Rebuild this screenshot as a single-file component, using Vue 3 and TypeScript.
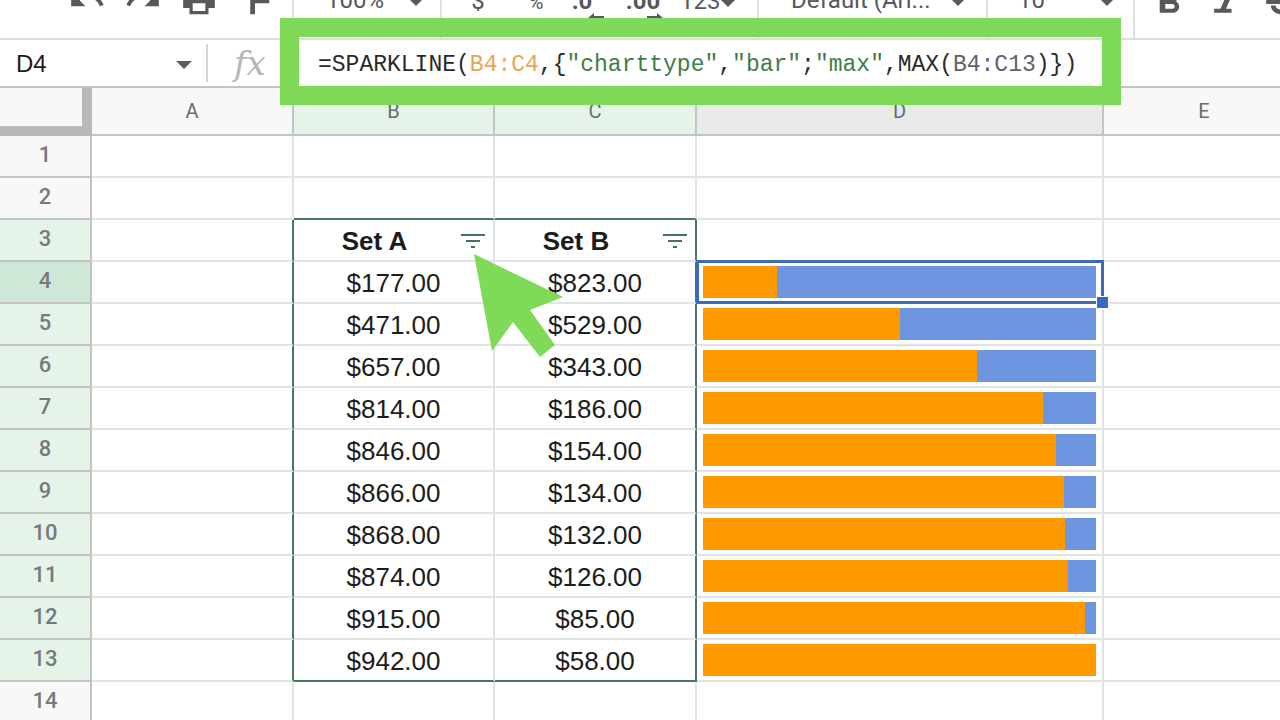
<script setup lang="ts">
interface DataRow {
  n: number
  a?: number
  b?: number
}

const columns = ['A', 'B', 'C', 'D', 'E']

const data: [number, number][] = [
  [177, 823], [471, 529], [657, 343], [814, 186], [846, 154],
  [866, 134], [868, 132], [874, 126], [915, 85], [942, 58],
]
const max = Math.max(...data.flat())

const rows: DataRow[] = Array.from({ length: 14 }, (_, i) => {
  const pair = data[i - 3]
  return pair ? { n: i + 1, a: pair[0], b: pair[1] } : { n: i + 1 }
})

const formula = [
  { t: '=SPARKLINE(', c: 'plain' },
  { t: 'B4:C4', c: 'range' },
  { t: ',{', c: 'plain' },
  { t: '"charttype"', c: 'str' },
  { t: ',', c: 'plain' },
  { t: '"bar"', c: 'str' },
  { t: ';', c: 'plain' },
  { t: '"max"', c: 'str' },
  { t: ',MAX(', c: 'plain' },
  { t: 'B4:C13', c: 'range2' },
  { t: ')})', c: 'plain' },
]

const money = (v: number) => '$' + v.toFixed(2)
const share = (v: number) => (v / max) * 100 + '%'
const inFilter = (n: number) => n >= 3 && n <= 13
</script>

<template>
  <div class="page">
    <header class="toolbar">
      <div class="tools">
        <div class="group history">
          <button aria-label="Undo"><svg class="icon" viewBox="0 0 24 24"><path d="M12.5 8c-2.65 0-5.05.99-6.9 2.6L2 7v9h9l-3.62-3.62c1.39-1.16 3.16-1.88 5.12-1.88 3.54 0 6.55 2.31 7.6 5.5l2.37-.78C21.08 11.03 17.15 8 12.5 8z" /></svg></button>
          <button aria-label="Redo"><svg class="icon" viewBox="0 0 24 24"><path d="M18.4 10.6C16.55 8.99 14.15 8 11.5 8c-4.65 0-8.58 3.03-9.96 7.22L3.9 16c1.05-3.19 4.05-5.5 7.6-5.5 1.95 0 3.73.72 5.12 1.88L13 16h9V7l-3.6 3.6z" /></svg></button>
          <button aria-label="Print"><svg class="icon" viewBox="0 0 24 24"><path d="M19 8H5c-1.66 0-3 1.34-3 3v6h4v4h12v-4h4v-6c0-1.66-1.34-3-3-3zm-3 11H8v-5h8v5zm3-7c-.55 0-1-.45-1-1s.45-1 1-1 1 .45 1 1-.45 1-1 1zm-1-9H6v4h12V3z" /></svg></button>
          <button aria-label="Paint format"><svg class="icon" viewBox="0 0 24 24"><path d="M18 4V3c0-.55-.45-1-1-1H5c-.55 0-1 .45-1 1v4c0 .55.45 1 1 1h12c.55 0 1-.45 1-1V6h1v6H9v9h3v-7h9V4z" /></svg></button>
        </div>
        <div class="group zoom">
          <select aria-label="Zoom"><option>100%</option></select>
          <svg class="caret" viewBox="0 0 16 8"><path d="M0 0h16L8 8z" /></svg>
        </div>
        <div class="group numbers">
          <button aria-label="Format as currency">$</button>
          <button class="percent" aria-label="Format as percent">%</button>
          <button class="decimal" aria-label="Decrease decimal places">.0<svg class="arrow" viewBox="0 0 16 10"><path d="M0 5l6-5v3h10v4H6v3z" /></svg></button>
          <button class="decimal" aria-label="Increase decimal places">.00<svg class="arrow more" viewBox="0 0 16 10"><path d="M16 5l-6-5v3H0v4h10v3z" /></svg></button>
          <button class="formats" aria-label="More formats">123<svg class="caret" viewBox="0 0 16 8"><path d="M0 0h16L8 8z" /></svg></button>
        </div>
        <div class="group font">
          <select aria-label="Font"><option>Default (Ari...</option></select>
          <svg class="caret" viewBox="0 0 16 8"><path d="M0 0h16L8 8z" /></svg>
        </div>
        <div class="group size">
          <select aria-label="Font size"><option>10</option></select>
          <svg class="caret" viewBox="0 0 16 8"><path d="M0 0h16L8 8z" /></svg>
        </div>
        <div class="group style">
          <button aria-label="Bold"><svg class="icon" viewBox="0 -2 24 24"><path d="M15.6 10.79c.97-.67 1.65-1.77 1.65-2.79 0-2.26-1.75-4-4-4H5.500v14h8.540c2.09 0 3.710-1.7 3.710-3.790 0-1.520-.86-2.820-2.150-3.420zM9 6.500h4c.83 0 1.500.67 1.500 1.500s-.67 1.500-1.500 1.500H9zm4.500 9H9v-3h4.500c.83 0 1.500.67 1.500 1.500s-.67 1.500-1.500 1.500z" /></svg></button>
          <button aria-label="Italic"><svg class="icon" viewBox="0 -2 24 24"><path d="M9 4v2.500h3.500L8.500 15.500H4.500V18h11v-2.500h-3.500L16 6.500h4V4z" /></svg></button>
          <button aria-label="Strikethrough"><svg class="icon" viewBox="0 0 24 24"><path d="M2 12h20v2.500H2z" /><path class="line" d="M17 8c0-2-2-3.500-5-3.500S7 6 7 8s1.500 3 3 3.500M6.500 15.500c0 2.500 2.500 4 5.500 4s5.500-1.500 5.500-4" /></svg></button>
        </div>
      </div>
    </header>

    <div class="formula-bar">
      <div class="name-box">
        <input type="text" value="D4" aria-label="Name box">
        <button aria-label="Named ranges"><svg class="caret" viewBox="0 0 16 8"><path d="M0 0h16L8 8z" /></svg></button>
      </div>
      <span class="fx">fx</span>
      <code class="formula" role="textbox" aria-label="Formula"><span v-for="(p, i) in formula" :key="i" :class="p.c">{{ p.t }}</span></code>
    </div>

    <main class="sheet">
      <table>
        <colgroup>
          <col class="c-num"><col class="c-a"><col class="c-b"><col class="c-c"><col class="c-d"><col>
        </colgroup>
        <thead>
          <tr>
            <th class="corner"></th>
            <th v-for="c in columns" :key="c" scope="col" :class="'h-' + c.toLowerCase()">{{ c }}</th>
          </tr>
        </thead>
        <tbody>
          <tr v-for="r in rows" :key="r.n">
            <th scope="row" :class="{ ranged: inFilter(r.n), current: r.n === 4 }">{{ r.n }}</th>
            <td :class="{ 'edge-right': inFilter(r.n) }"></td>
            <td :class="{ 'edge-bottom': r.n === 2 || r.n === 13 }">
              <div v-if="r.n === 3" class="title">
                <span>Set A</span>
                <button aria-label="Filter Set A"><svg viewBox="0 0 24 16"><path d="M0 1h24v2H0zM5 7h14v2H5zM10 13h4v2h-4z" /></svg></button>
              </div>
              <template v-else-if="r.a !== undefined">{{ money(r.a) }}</template>
            </td>
            <td :class="{ 'edge-bottom': r.n === 2 || r.n === 13, 'edge-right': inFilter(r.n) }">
              <div v-if="r.n === 3" class="title">
                <span>Set B</span>
                <button aria-label="Filter Set B"><svg viewBox="0 0 24 16"><path d="M0 1h24v2H0zM5 7h14v2H5zM10 13h4v2h-4z" /></svg></button>
              </div>
              <template v-else-if="r.b !== undefined">{{ money(r.b) }}</template>
            </td>
            <td class="spark">
              <div v-if="r.a !== undefined" class="bar">
                <div class="first" :style="{ width: share(r.a) }"></div>
              </div>
              <div v-if="r.n === 4" class="selection"><i class="handle"></i></div>
            </td>
            <td></td>
          </tr>
        </tbody>
      </table>
    </main>

    <div class="highlight"></div>
    <svg class="pointer" viewBox="0 0 90 104"><path d="M0 0l89 43-33 13 25 35-15 12-27-35-21 29z" /></svg>
  </div>
</template>

<style>
body {
  margin: 0;
  background: #fff;
}
</style>

<style scoped>
.page {
  position: relative;
  display: flex;
  flex-direction: column;
  height: 100vh;
  overflow: hidden;
  background: #fff;
  color: #1c1c1c;
  font-family: "Liberation Sans", Arial, sans-serif;
}

* {
  box-sizing: border-box;
}

button,
select,
input {
  margin: 0;
  padding: 0;
  border: 0;
  background: none;
  color: inherit;
  font: inherit;
}

select {
  appearance: none;
  flex: 1;
  min-width: 0;
}

svg {
  display: block;
  flex: none;
  fill: currentColor;
}

.toolbar {
  display: flex;
  align-items: flex-end;
  flex: none;
  height: 40px;
  overflow: hidden;
  border-bottom: 2px solid #dcddde;
}

.tools {
  display: flex;
  flex: 1;
  height: 76px;
  color: #56585b;
  font: 24px/28px Roboto, sans-serif;
}

.group {
  display: flex;
  align-items: center;
  flex: none;
  border-right: 2px solid #e0e1e3;
}

.icon {
  width: 38px;
  height: 38px;
}

.line {
  fill: none;
  stroke: currentColor;
  stroke-width: 3;
}

.caret {
  width: 16px;
  height: 8px;
}

.tools .caret {
  margin-top: 4px;
}

.history {
  gap: 18px;
  width: 294px;
  padding-left: 68px;
}

.zoom {
  width: 148px;
  padding: 0 16px 0 32px;
}

.numbers {
  display: grid;
  grid-template-columns: 72px 44px 48px 74px 1fr;
  width: 317px;
  padding-top: 2px;
}

.percent {
  padding-top: 2px;
  font-size: 20px;
}

.decimal {
  position: relative;
  font-weight: 700;
}

.arrow {
  position: absolute;
  right: 2px;
  bottom: -8px;
  width: 16px;
  height: 10px;
}

.arrow.more {
  right: 17px;
}

.formats {
  display: flex;
  align-items: center;
}

.font {
  width: 229px;
  padding: 0 20px 0 32px;
}

.size {
  width: 147px;
  padding: 0 18px 0 30px;
}

.style {
  flex: 1;
  gap: 18px;
  padding-left: 16px;
  border-right: 0;
}

.formula-bar {
  display: flex;
  align-items: center;
  flex: none;
  height: 48px;
  border-bottom: 2px solid #c3c4c5;
}

.name-box {
  display: flex;
  align-items: center;
  width: 208px;
  height: 38px;
  padding: 2px 14px 0 16px;
  border-right: 2px solid #d5d6d7;
  font-size: 24px;
}

.name-box input {
  flex: 1;
  min-width: 0;
}

.name-box button {
  padding-top: 2px;
  color: #5b5d60;
}

.fx {
  width: 110px;
  padding-left: 26px;
  color: #b5b6b7;
  font: italic 34px/40px "DejaVu Serif", serif;
}

.formula {
  padding-top: 4px;
  font: 23px/40px "Liberation Mono", monospace;
  white-space: pre;
}

.plain {
  color: #2a2a2a;
}

.range {
  color: #eba653;
}

.str {
  color: #3f7d46;
}

.range2 {
  color: #685c70;
}

.sheet {
  flex: 1;
  min-height: 0;
  overflow: hidden;
}

table {
  width: 100%;
  min-width: 1306px;
  border-spacing: 0;
  table-layout: fixed;
}

.c-num {
  width: 92px;
}

.c-a,
.c-c {
  width: 202px;
}

.c-b {
  width: 201px;
}

.c-d {
  width: 407px;
}

th,
td {
  padding: 0;
  border: solid #e2e4e4;
  border-width: 0 2px 2px 0;
  text-align: center;
}

th {
  border-color: #c2c4c4;
  background: #f8f8f9;
  color: #696c6f;
  font-family: Roboto, sans-serif;
}

thead th {
  height: 48px;
  font-size: 20px;
  font-weight: 400;
}

thead .corner {
  border: solid #b8b9ba;
  border-width: 0 10px 10px 0;
}

.h-b,
.h-c,
.ranged {
  background: #e6f3e9;
}

thead .h-d {
  background: #e8eaea;
}

tbody th {
  padding-bottom: 2px;
  font-size: 22px;
  line-height: 38px;
  font-weight: 500;
  color: #777a7c;
}

.current {
  background: #cee8d7;
}

td {
  height: 42px;
  padding-top: 2px;
  font-size: 26px;
  line-height: 38px;
}

.edge-right {
  border-right-color: #457b58;
}

.edge-bottom {
  border-bottom-color: #457b58;
}

.title {
  display: flex;
  font-weight: 700;
}

.title span {
  flex: 1;
}

.title button {
  display: flex;
  align-items: center;
  width: 38px;
  padding-left: 6px;
  color: #3f7655;
}

.title svg {
  width: 24px;
  height: 16px;
}

.spark {
  position: relative;
  padding: 0;
}

.bar {
  height: 32px;
  margin: 4px 6px;
  background: #6e95e0;
}

.first {
  height: 100%;
  background: #ff9900;
}

.selection {
  position: absolute;
  inset: -2px -2px -2px -1px;
  z-index: 1;
  border: 3px solid #3b6cb4;
}

.handle {
  position: absolute;
  right: -8px;
  bottom: -8px;
  width: 13px;
  height: 13px;
  border: 1px solid #fff;
  background: #356bc0;
}

.highlight {
  position: absolute;
  top: 18px;
  left: 280px;
  width: 841px;
  height: 87px;
  border: 19px solid #7fda58;
}

.pointer {
  position: absolute;
  top: 254px;
  left: 474px;
  z-index: 2;
  width: 90px;
  height: 104px;
  color: #7fda58;
}
</style>
